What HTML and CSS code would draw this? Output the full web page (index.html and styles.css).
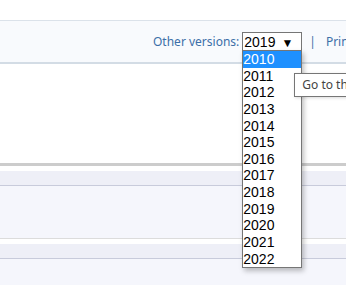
FILE: index.html
```html
<!DOCTYPE html>
<html lang="en">

<head>
  <meta charset="UTF-8" />
  <meta name="viewport" content="width=device-width, initial-scale=1.0" />
  <title>Other versions</title>
  <link rel="stylesheet" href="styles.css">
</head>

<body>
  <div class="topo"></div>

  <div class="barra">
    <span class="rotulo">Other versions:</span>
    <div class="seletor">
      <div class="seletor-caixa">
        <span class="seletor-valor">2019</span>
        <span class="seletor-seta">▼</span>
      </div>
      <ul class="seletor-lista">
        <li class="ativo">2010</li>
        <li>2011</li>
        <li>2012</li>
        <li>2013</li>
        <li>2014</li>
        <li>2015</li>
        <li>2016</li>
        <li>2017</li>
        <li>2018</li>
        <li>2019</li>
        <li>2020</li>
        <li>2021</li>
        <li>2022</li>
      </ul>
      <div class="dica">Go to the previous version</div>
    </div>
    <span class="separador">|</span>
    <a class="link" href="#">Print</a>
  </div>

  <div class="conteudo"></div>
  <div class="regua"></div>

  <div class="secao">
    <div class="secao-titulo"></div>
    <div class="secao-corpo"></div>
  </div>

  <div class="secao">
    <div class="secao-titulo"></div>
    <div class="secao-corpo ultima"></div>
  </div>
</body>

</html>
```

FILE: styles.css
```css
html,
body {
  margin: 0;
  padding: 0;
  height: 100%;
  overflow: hidden;
  background-color: #fff;
  font-family: 'Segoe UI', 'Noto Sans', sans-serif;
}

.topo {
  height: 20px;
}

.barra {
  height: 41px;
  border-top: 1px solid #dbe2ea;
  border-bottom: 2px solid #d3dce5;
  background-color: #f8fafd;
  display: flex;
  align-items: center;
  padding-left: 153px;
  white-space: nowrap;
  position: relative;
  z-index: 2;
}

.barra > * {
  flex-shrink: 0;
}

.rotulo {
  font-size: 12px;
  color: #3c6fa8;
  margin-right: 3px;
}

.seletor {
  position: relative;
  width: 60px;
}

.seletor-caixa {
  height: 17px;
  border: 1px solid #767676;
  background-color: #fff;
  display: flex;
  align-items: center;
  justify-content: space-between;
  padding: 0 8px 0 1px;
  font-family: 'Liberation Sans', Arial, sans-serif;
  font-size: 14px;
  color: #000;
}

.seletor-seta {
  font-size: 12px;
  margin-top: 2px;
}

.seletor-lista {
  position: absolute;
  top: 18px;
  left: 0;
  width: 58px;
  margin: 0;
  padding: 0;
  list-style: none;
  background-color: #fff;
  border: 1px solid #767676;
  box-shadow: 2px 3px 5px rgba(0, 0, 0, 0.25);
  font-family: 'Liberation Sans', Arial, sans-serif;
  font-size: 14px;
  color: #000;
}

.seletor-lista li {
  height: 16.65px;
  line-height: 16.65px;
}

.seletor-lista li.ativo {
  background-color: #1e90ff;
  color: #fff;
}

.dica {
  position: absolute;
  top: 41px;
  left: 52px;
  height: 22px;
  line-height: 21px;
  padding: 0 7px;
  border: 1px solid #767676;
  background-color: #fff;
  font-size: 12px;
  color: #444;
  box-shadow: 1px 1px 3px rgba(0, 0, 0, 0.15);
}

.separador {
  font-size: 12px;
  color: #3c6fa8;
  margin-left: 7px;
}

.link {
  font-size: 12px;
  color: #3c6fa8;
  text-decoration: none;
  margin-left: 10px;
}

.conteudo {
  height: 99px;
}

.regua {
  height: 3px;
  background-color: #cccccc;
}

.secao-titulo {
  height: 14px;
  margin-top: 5px;
  background-color: #eeeff7;
  border-bottom: 1px solid #c8cbdb;
}

.secao-corpo {
  height: 52px;
  background-color: #f5f6fc;
  border-bottom: 1px solid #dcdcdc;
}

.secao-corpo.ultima {
  height: 40px;
  border-bottom: none;
}
```
